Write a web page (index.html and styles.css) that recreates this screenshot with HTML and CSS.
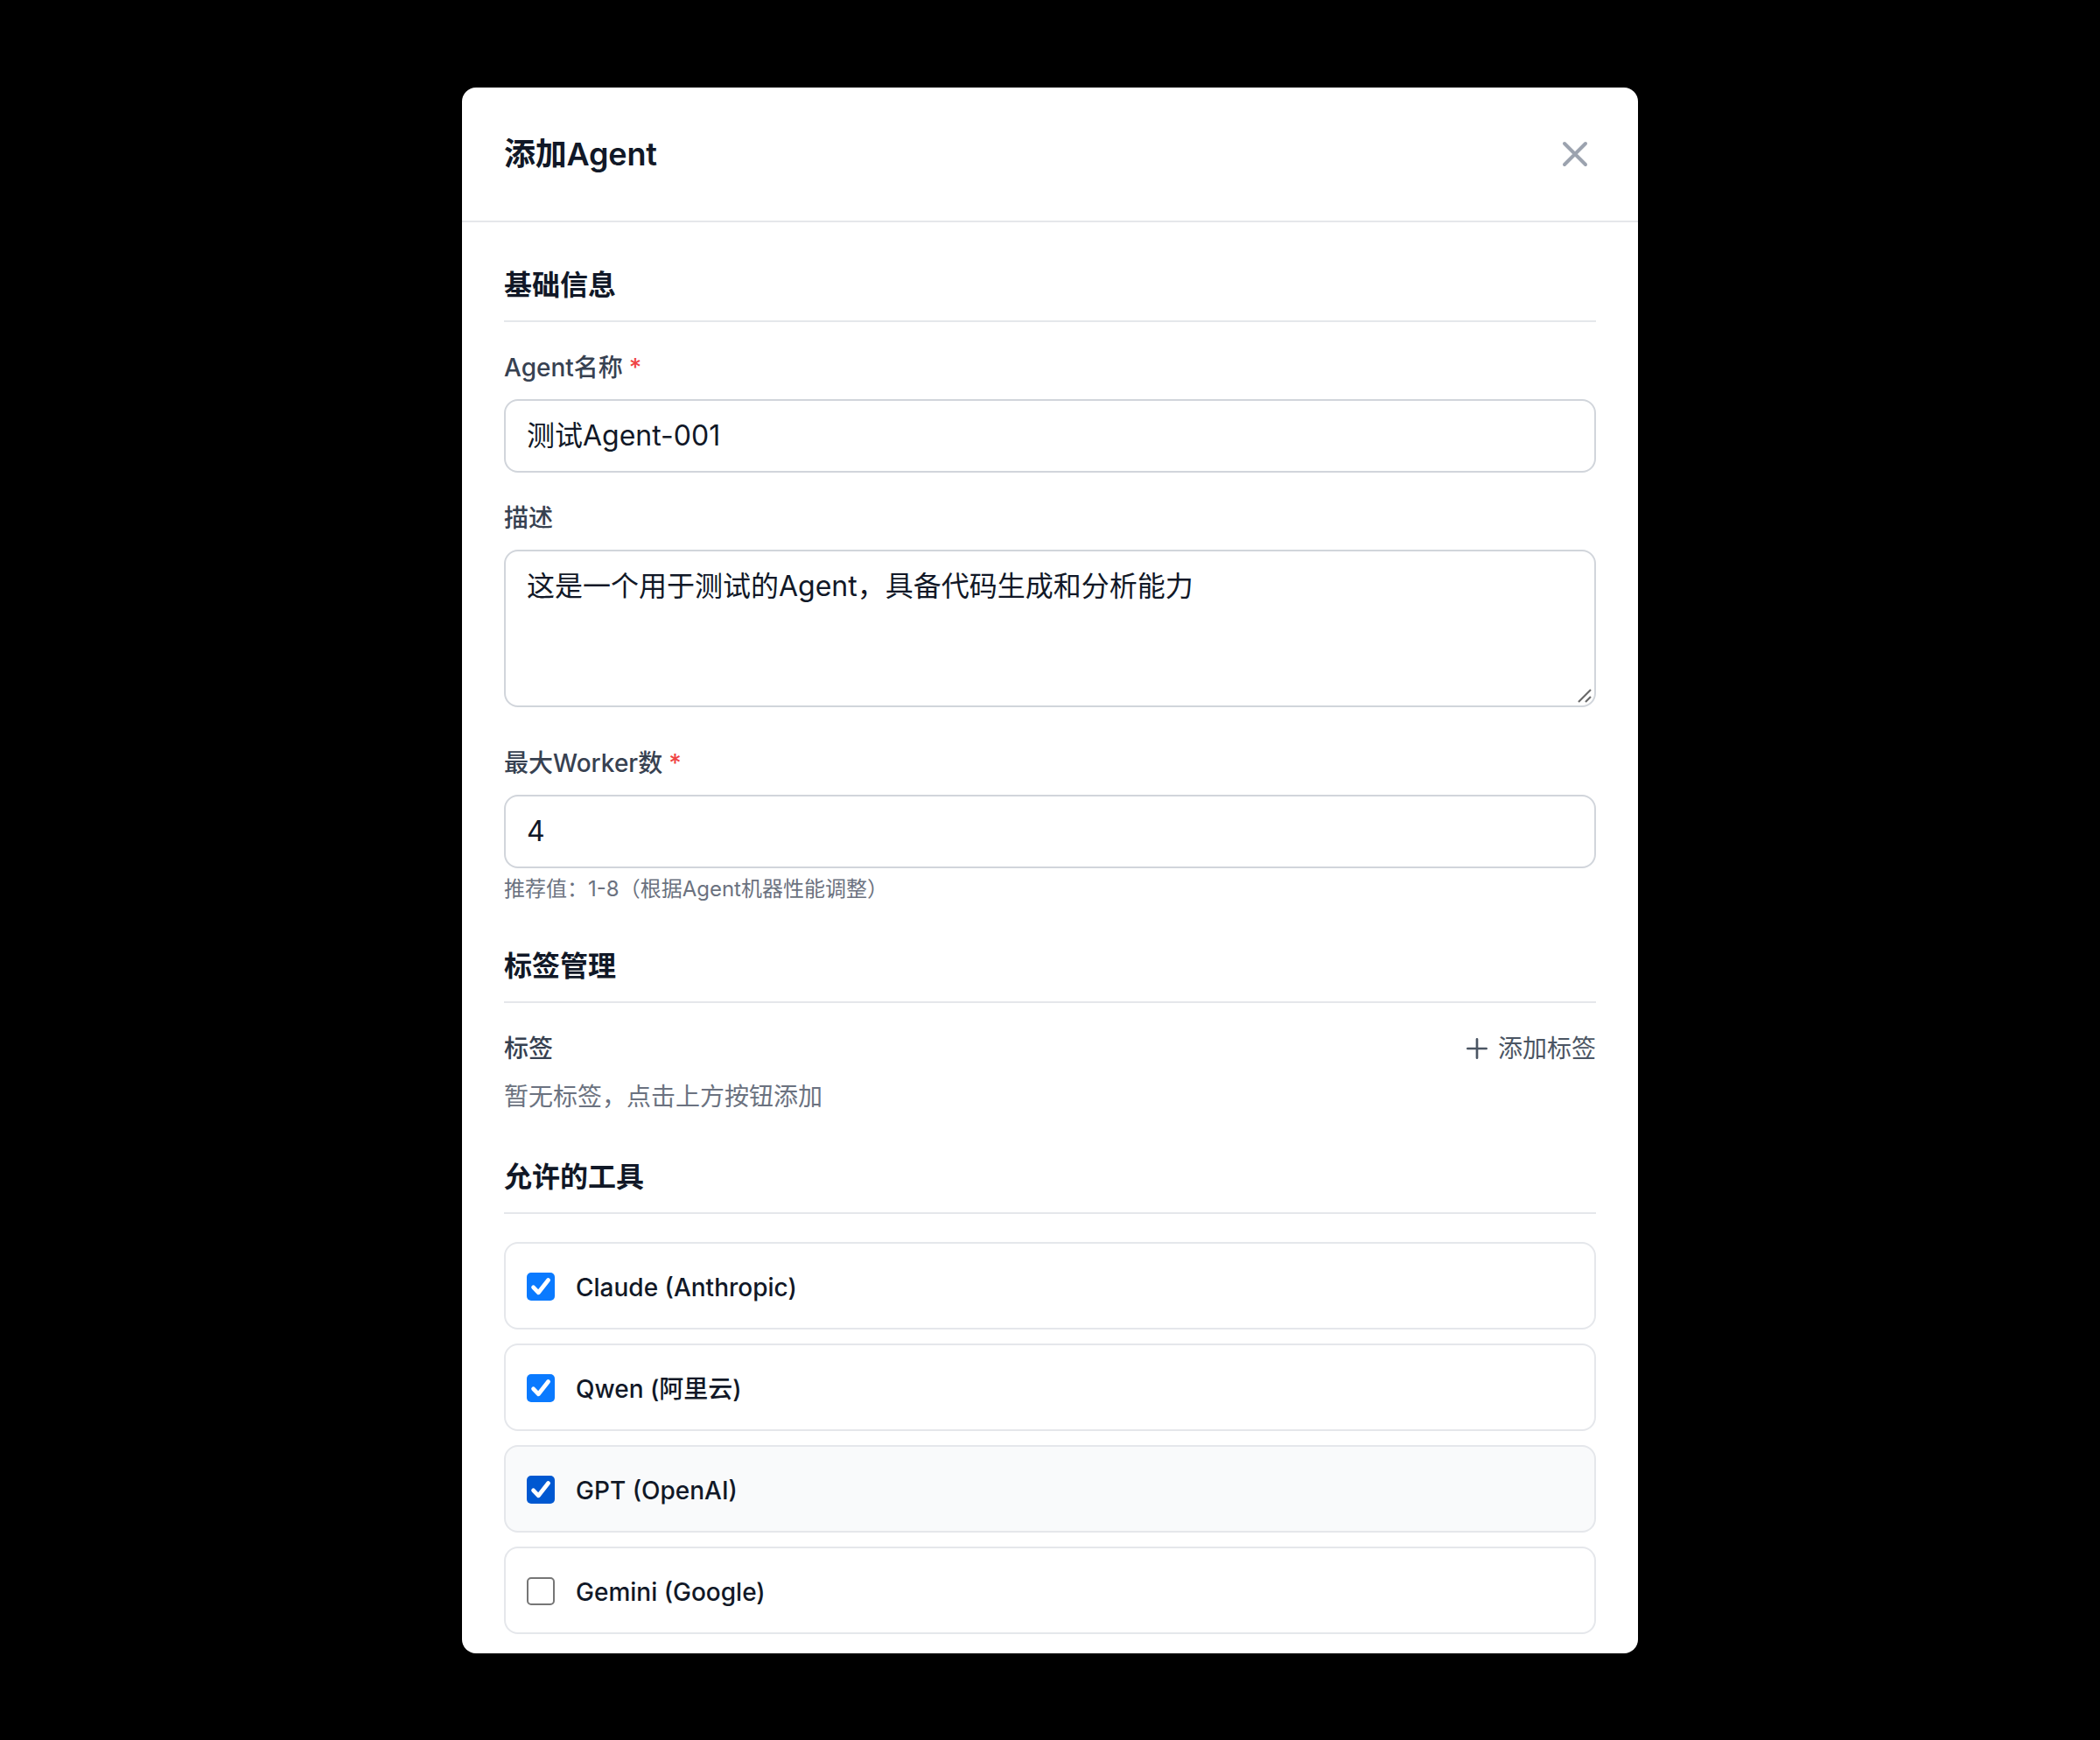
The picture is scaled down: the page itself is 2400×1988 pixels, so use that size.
FILE: index.html
```html
<!DOCTYPE html>
<html lang="zh-CN">
<head>
<meta charset="utf-8">
<title>添加Agent</title>
<link rel="stylesheet" href="styles.css">
</head>
<body>
<div class="overlay">
  <div class="modal">
    <div class="modal-header">
      <h2 class="modal-title">添加Agent</h2>
      <button class="close-btn" type="button" aria-label="关闭">
        <svg viewBox="0 0 24 24" fill="none" stroke="currentColor" stroke-width="2" stroke-linecap="round" stroke-linejoin="round"><path d="M6 18L18 6M6 6l12 12"/></svg>
      </button>
    </div>
    <div class="modal-body">
      <section class="section">
        <h3 class="section-title">基础信息</h3>
        <div class="fields">
          <div class="field">
            <label class="label">Agent名称<span class="req">*</span></label>
            <div class="input">测试Agent-001</div>
          </div>
          <div class="field">
            <label class="label">描述</label>
            <div class="input textarea">这是一个用于测试的Agent，具备代码生成和分析能力<svg class="grip" viewBox="0 0 10 10"><path d="M9 2L2 9M9 6L6 9" stroke="#6b6b6b" stroke-width="1.1" fill="none"/></svg></div>
          </div>
          <div class="field">
            <label class="label">最大Worker数<span class="req">*</span></label>
            <div class="input">4</div>
            <p class="hint">推荐值：1-8（根据Agent机器性能调整）</p>
          </div>
        </div>
      </section>

      <section class="section">
        <h3 class="section-title">标签管理</h3>
        <div class="tag-row">
          <span class="label">标签</span>
          <button class="add-btn" type="button">
            <svg viewBox="0 0 24 24" fill="none" stroke="currentColor" stroke-width="2" stroke-linecap="round"><path d="M12 4v16m8-8H4"/></svg>
            添加标签
          </button>
        </div>
        <p class="empty">暂无标签，点击上方按钮添加</p>
      </section>

      <section class="section">
        <h3 class="section-title">允许的工具</h3>
        <div class="tools">
          <label class="tool">
            <span class="check on"><svg viewBox="0 0 16 16"><path d="M3.8 8.4l2.9 3L12.3 4.3" fill="none" stroke="#fff" stroke-width="2.4" stroke-linecap="round" stroke-linejoin="round"/></svg></span>
            <span class="tool-name">Claude (Anthropic)</span>
          </label>
          <label class="tool">
            <span class="check on"><svg viewBox="0 0 16 16"><path d="M3.8 8.4l2.9 3L12.3 4.3" fill="none" stroke="#fff" stroke-width="2.4" stroke-linecap="round" stroke-linejoin="round"/></svg></span>
            <span class="tool-name">Qwen (阿里云)</span>
          </label>
          <label class="tool hover">
            <span class="check on"><svg viewBox="0 0 16 16"><path d="M3.8 8.4l2.9 3L12.3 4.3" fill="none" stroke="#fff" stroke-width="2.4" stroke-linecap="round" stroke-linejoin="round"/></svg></span>
            <span class="tool-name">GPT (OpenAI)</span>
          </label>
          <label class="tool">
            <span class="check"></span>
            <span class="tool-name">Gemini (Google)</span>
          </label>
        </div>
      </section>
    </div>
  </div>
</div>
</body>
</html>
```
FILE: styles.css
```css
* { box-sizing: border-box; }
html, body { margin: 0; padding: 0; }
body {
  background: #000;
  font-family: Inter, "Noto Sans CJK SC", sans-serif;
  color: #111827;
}
.overlay {
  width: 2400px;
  height: 1988px;
  display: flex;
  align-items: center;
  justify-content: center;
}
.modal {
  width: 1344px;
  height: 1789px;
  background: #fff;
  border-radius: 16px;
  display: flex;
  flex-direction: column;
  overflow: hidden;
}
.modal-header {
  display: flex;
  align-items: center;
  justify-content: space-between;
  padding: 48px;
  border-bottom: 2px solid #e5e7eb;
  flex: none;
}
.modal-title {
  margin: 0;
  font-size: 36px;
  line-height: 56px;
  font-weight: 600;
  color: #111827;
  letter-spacing: -0.2px;
}
.close-btn {
  width: 48px;
  height: 48px;
  padding: 0;
  border: 0;
  background: none;
  color: #9ca3af;
  display: flex;
}
.close-btn svg { width: 48px; height: 48px; }
.modal-body {
  flex: 1;
  overflow: hidden;
  padding: 48px;
  display: flex;
  flex-direction: column;
  gap: 48px;
}
.section-title {
  margin: 0 0 32px;
  padding-bottom: 16px;
  border-bottom: 2px solid #e5e7eb;
  font-size: 32px;
  line-height: 48px;
  font-weight: 600;
  color: #111827;
}
.fields {
  display: flex;
  flex-direction: column;
  gap: 32px;
}
.label {
  display: block;
  font-size: 28px;
  line-height: 40px;
  font-weight: 500;
  color: #374151;
  margin-bottom: 16px;
}
.req { color: #ef4444; margin-left: 7px; }
.input {
  position: relative;
  width: 100%;
  border: 2px solid #d1d5db;
  border-radius: 16px;
  padding: 16px 24px;
  font-size: 32px;
  line-height: 48px;
  color: #111827;
  height: 84px;
}
.textarea {
  height: 180px;
  margin-bottom: 12px;
}
.grip {
  position: absolute;
  right: 2px;
  bottom: 2px;
  width: 20px;
  height: 20px;
}
.hint {
  margin: 8px 0 0;
  font-size: 24px;
  line-height: 32px;
  color: #6b7280;
}
.tag-row {
  display: flex;
  align-items: center;
  justify-content: space-between;
}
.tag-row .label { margin: 0; }
.add-btn {
  display: flex;
  align-items: center;
  gap: 8px;
  padding: 0;
  border: 0;
  background: none;
  font-family: inherit;
  font-size: 28px;
  line-height: 40px;
  color: #4b5563;
}
.add-btn svg { width: 32px; height: 32px; }
.empty {
  margin: 15px 0 0;
  font-size: 28px;
  line-height: 40px;
  color: #6b7280;
}
.tools {
  display: flex;
  flex-direction: column;
  gap: 16px;
}
.tool {
  display: flex;
  align-items: center;
  height: 100px;
  padding: 2px 24px 0;
  border: 2px solid #e5e7eb;
  border-radius: 16px;
  background: #fff;
}
.tool.hover { background: #f9fafb; }
.check {
  width: 32px;
  height: 32px;
  border-radius: 5px;
  border: 2px solid #767676;
  background: #fff;
  flex: none;
  display: flex;
}
.check.on {
  border: 0;
  background: #0a7aff;
}
.tool.hover .check.on { background: #0058d1; }
.check svg { width: 32px; height: 32px; }
.tool-name {
  margin-left: 24px;
  padding-top: 2px;
  font-size: 28px;
  line-height: 40px;
  font-weight: 500;
  color: #111827;
}
```
